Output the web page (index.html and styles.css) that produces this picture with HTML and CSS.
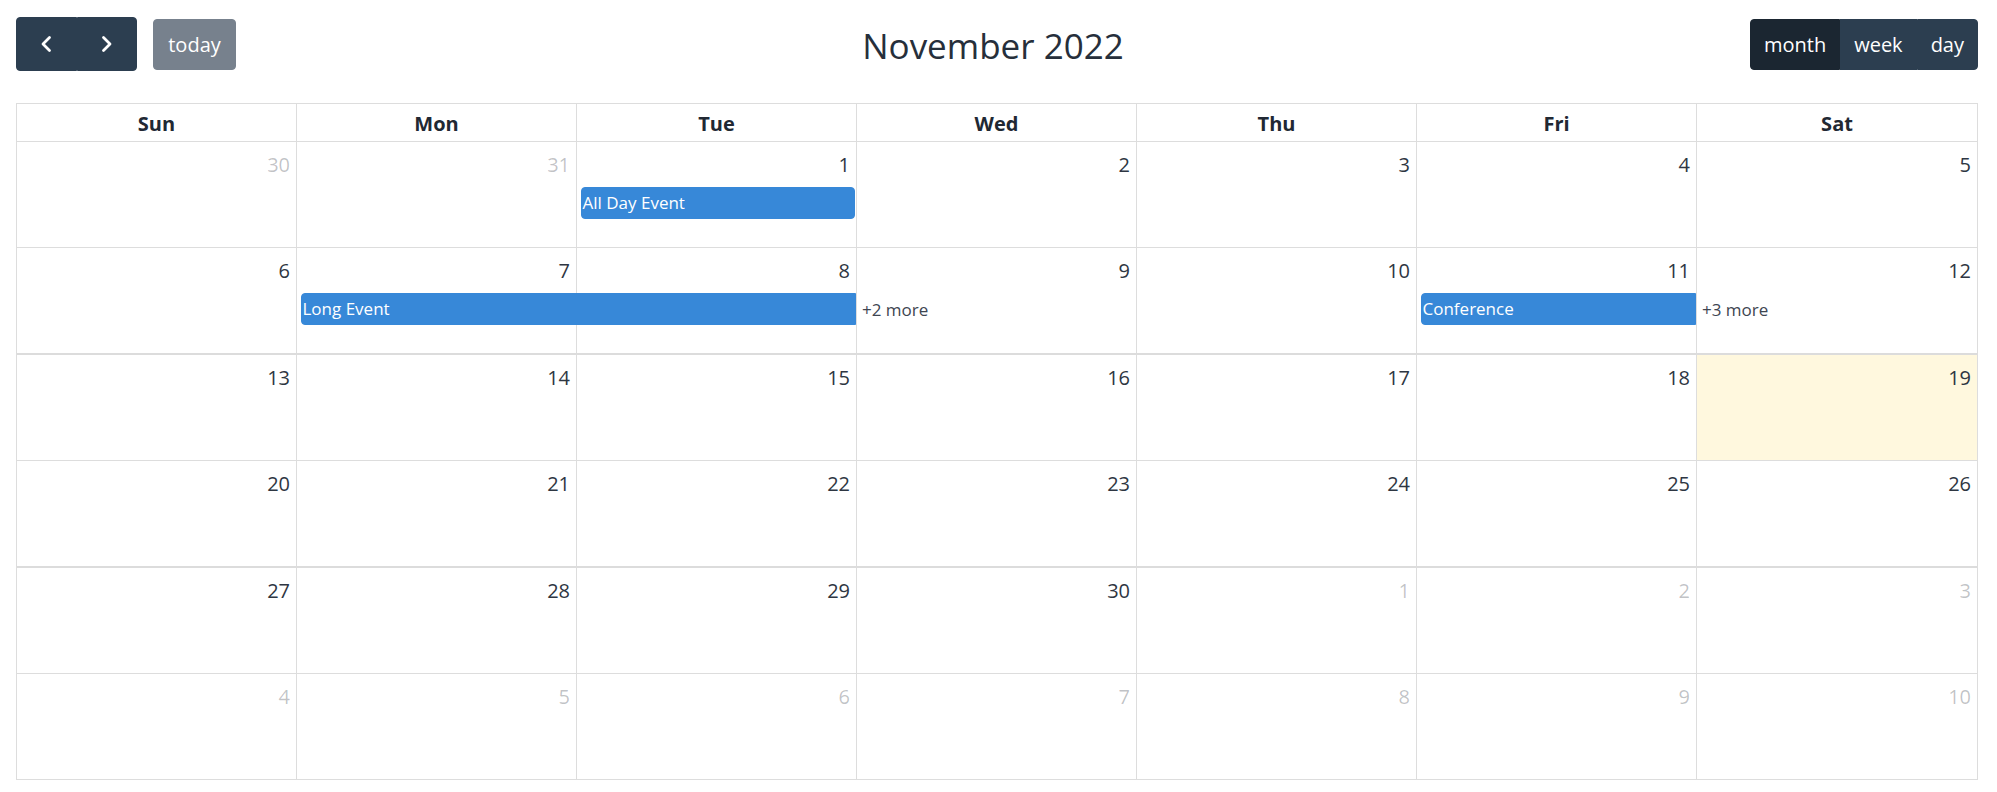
FILE: index.html
```html
<!DOCTYPE html>
<html lang="en">
<head>
<meta charset="utf-8">
<title>Calendar</title>
<link rel="stylesheet" href="styles.css">
</head>
<body>
<div class="toolbar">
  <div class="chunk">
    <div class="btn-group nav">
      <button class="btn icon-btn" aria-label="prev">
        <svg width="14" height="18" viewBox="0 0 14 18"><polyline points="10.5,2.5 4,9 10.5,15.5" fill="none" stroke="#fff" stroke-width="2.8" stroke-linecap="round" stroke-linejoin="round"/></svg>
      </button>
      <button class="btn icon-btn" aria-label="next">
        <svg width="14" height="18" viewBox="0 0 14 18"><polyline points="3.5,2.5 10,9 3.5,15.5" fill="none" stroke="#fff" stroke-width="2.8" stroke-linecap="round" stroke-linejoin="round"/></svg>
      </button>
    </div>
    <button class="btn today-btn">today</button>
  </div>
  <h2 class="title">November 2022</h2>
  <div class="btn-group views">
    <button class="btn active">month</button>
    <button class="btn">week</button>
    <button class="btn">day</button>
  </div>
</div>

<div class="calendar">
  <div class="head">
    <div class="hcell">Sun</div>
    <div class="hcell">Mon</div>
    <div class="hcell">Tue</div>
    <div class="hcell">Wed</div>
    <div class="hcell">Thu</div>
    <div class="hcell">Fri</div>
    <div class="hcell">Sat</div>
  </div>

  <div class="week h106">
    <div class="day other"><span class="num">30</span></div>
    <div class="day other"><span class="num">31</span></div>
    <div class="day"><span class="num">1</span></div>
    <div class="day"><span class="num">2</span></div>
    <div class="day"><span class="num">3</span></div>
    <div class="day"><span class="num">4</span></div>
    <div class="day"><span class="num">5</span></div>
    <div class="event c3">All Day Event</div>
  </div>

  <div class="week h107 thick">
    <div class="day"><span class="num">6</span></div>
    <div class="day"><span class="num">7</span></div>
    <div class="day"><span class="num">8</span></div>
    <div class="day"><span class="num">9</span></div>
    <div class="day"><span class="num">10</span></div>
    <div class="day"><span class="num">11</span></div>
    <div class="day"><span class="num">12</span></div>
    <div class="event cont c2 span2">Long Event</div>
    <div class="more c4">+2 more</div>
    <div class="event cont c6">Conference</div>
    <div class="more c7">+3 more</div>
  </div>

  <div class="week h106">
    <div class="day"><span class="num">13</span></div>
    <div class="day"><span class="num">14</span></div>
    <div class="day"><span class="num">15</span></div>
    <div class="day"><span class="num">16</span></div>
    <div class="day"><span class="num">17</span></div>
    <div class="day"><span class="num">18</span></div>
    <div class="day is-today"><span class="num">19</span></div>
  </div>

  <div class="week h107 thick">
    <div class="day"><span class="num">20</span></div>
    <div class="day"><span class="num">21</span></div>
    <div class="day"><span class="num">22</span></div>
    <div class="day"><span class="num">23</span></div>
    <div class="day"><span class="num">24</span></div>
    <div class="day"><span class="num">25</span></div>
    <div class="day"><span class="num">26</span></div>
  </div>

  <div class="week h106">
    <div class="day"><span class="num">27</span></div>
    <div class="day"><span class="num">28</span></div>
    <div class="day"><span class="num">29</span></div>
    <div class="day"><span class="num">30</span></div>
    <div class="day other"><span class="num">1</span></div>
    <div class="day other"><span class="num">2</span></div>
    <div class="day other"><span class="num">3</span></div>
  </div>

  <div class="week last">
    <div class="day other"><span class="num">4</span></div>
    <div class="day other"><span class="num">5</span></div>
    <div class="day other"><span class="num">6</span></div>
    <div class="day other"><span class="num">7</span></div>
    <div class="day other"><span class="num">8</span></div>
    <div class="day other"><span class="num">9</span></div>
    <div class="day other"><span class="num">10</span></div>
  </div>
</div>
</body>
</html>
```

FILE: styles.css
```css
* { box-sizing: border-box; }

html, body {
  margin: 0;
  padding: 0;
  background: #fff;
}

body {
  font-family: "Open Sans", "Noto Sans", sans-serif;
  font-size: 20px;
  color: #232a35;
}

.toolbar {
  margin: 17px 19px 0 16px;
  height: 54px;
  display: flex;
  justify-content: space-between;
  align-items: center;
}

.chunk {
  display: flex;
  align-items: center;
}

.btn-group {
  display: flex;
}

.btn {
  font-family: "Open Sans", "Noto Sans", sans-serif;
  font-size: 20px;
  line-height: 30px;
  color: #fff;
  background: #2c3e50;
  border: 1px solid #2c3e50;
  border-radius: 0;
  height: 51px;
  padding: 1px 13px 0;
  margin: 0;
  display: flex;
  align-items: center;
  justify-content: center;
  cursor: pointer;
}

.btn-group .btn:first-child {
  border-top-left-radius: 4px;
  border-bottom-left-radius: 4px;
}

.btn-group .btn:last-child {
  border-top-right-radius: 4px;
  border-bottom-right-radius: 4px;
}

.nav .icon-btn {
  width: 60.5px;
  height: 54px;
  padding: 0;
}

.today-btn {
  margin-left: 16px;
  padding: 1px 14px 0;
  border-radius: 4px;
  background: #77818d;
  border-color: #77818d;
  width: 83px;
}

.views .btn.active {
  background: #1b2631;
  border-color: #1b2631;
}

.title {
  margin: 0;
  font-size: 35px;
  font-weight: 400;
  line-height: 1.2;
  color: #262f3b;
  position: relative;
  top: 2px;
}

.calendar {
  margin: 32px 19px 0 16px;
  width: 1962px;
  border: 1px solid #ddd;
}

.head {
  display: grid;
  grid-template-columns: repeat(7, 1fr);
  height: 38px;
  border-bottom: 1px solid #ddd;
}

.hcell {
  border-right: 1px solid #ddd;
  text-align: center;
  font-weight: 700;
  line-height: 30px;
  padding-top: 5px;
  color: #212833;
}

.hcell:last-child,
.day:nth-child(7) {
  border-right: none;
}

.week {
  display: grid;
  grid-template-columns: repeat(7, 1fr);
  grid-template-rows: 45px 32px 1fr;
  border-bottom: 1px solid #ddd;
}

.week.h106 { height: 106px; }
.week.h107 { height: 107px; }
.week.thick { border-bottom: 2px solid #dcdcdc; }
.week.last { height: 105px; border-bottom: none; }

.day {
  grid-row: 1 / -1;
  border-right: 1px solid #ddd;
}

.day:nth-child(1) { grid-column: 1; }
.day:nth-child(2) { grid-column: 2; }
.day:nth-child(3) { grid-column: 3; }
.day:nth-child(4) { grid-column: 4; }
.day:nth-child(5) { grid-column: 5; }
.day:nth-child(6) { grid-column: 6; }
.day:nth-child(7) { grid-column: 7; }

.num {
  display: block;
  text-align: right;
  padding: 8px 6px 0 0;
  font-size: 20px;
  line-height: 30px;
  color: #2e3642;
}

.day.other .num {
  color: rgba(35, 42, 53, 0.28);
}

.day.is-today {
  background: #fff8de;
}

.event {
  grid-row: 2;
  margin: 0 2.5px 0 3.5px;
  background: #3788d8;
  border: 1px solid #3788d8;
  border-radius: 4px;
  color: #fff;
  font-size: 17px;
  line-height: 28px;
  padding: 1px 0 0 1px;
  white-space: nowrap;
  overflow: hidden;
}

.event.cont {
  border-top-right-radius: 0;
  border-bottom-right-radius: 0;
  margin-right: 1px;
}

.more {
  grid-row: 2;
  align-self: center;
  font-size: 17px;
  line-height: 28px;
  padding: 2px 0 0 5px;
  color: #3e4551;
}

.c2 { grid-column: 2; }
.c3 { grid-column: 3; }
.c4 { grid-column: 4; }
.c6 { grid-column: 6; }
.c7 { grid-column: 7; }
.c2.span2 { grid-column: 2 / span 2; }
```
